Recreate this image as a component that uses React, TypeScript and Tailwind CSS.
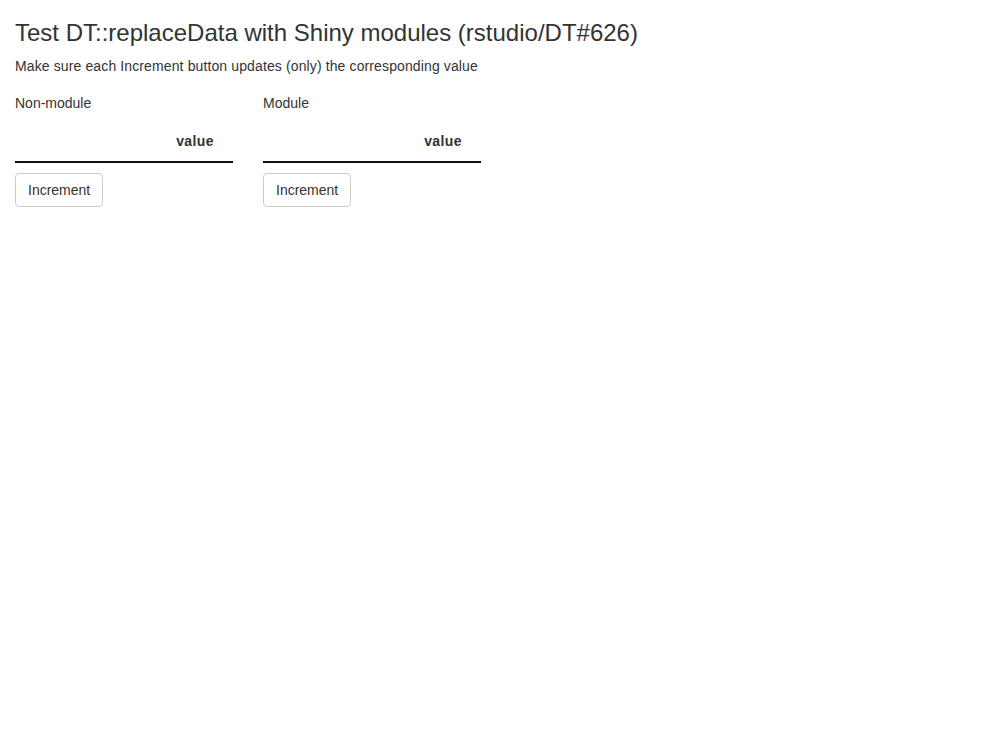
import React from "react";

const Panel: React.FC<{ label: string }> = ({ label }) => {
  return (
    <div className="w-[218px]">
      <p className="mt-[6.6px] mb-[8px] leading-5">{label}</p>
      <table className="w-full border-b-2 border-[#111] mb-[10px]">
        <thead>
          <tr>
            <th className="pt-[10px] pb-[10px] pl-[18px] pr-[19px] text-right font-bold leading-5 tracking-[0.4px]">
              value
            </th>
          </tr>
        </thead>
      </table>
      <button className="h-[34px] px-3 border border-[#ccc] rounded bg-white text-[14px] text-[#333] leading-5">
        Increment
      </button>
    </div>
  );
};

export default function App() {
  return (
    <div
      className="min-h-screen bg-white px-[15px] text-[14px] text-[#333]"
      style={{ fontFamily: '"Liberation Sans", Arial, sans-serif' }}
    >
      <h3 className="mt-5 mb-[10px] text-[24px] leading-[1.1] font-normal">
        Test DT::replaceData with Shiny modules (rstudio/DT#626)
      </h3>
      <p className="mb-[10px] leading-5 tracking-[0.12px]">
        Make sure each Increment button updates (only) the corresponding value
      </p>
      <div className="flex gap-[30px]">
        <Panel label="Non-module" />
        <Panel label="Module" />
      </div>
    </div>
  );
}
